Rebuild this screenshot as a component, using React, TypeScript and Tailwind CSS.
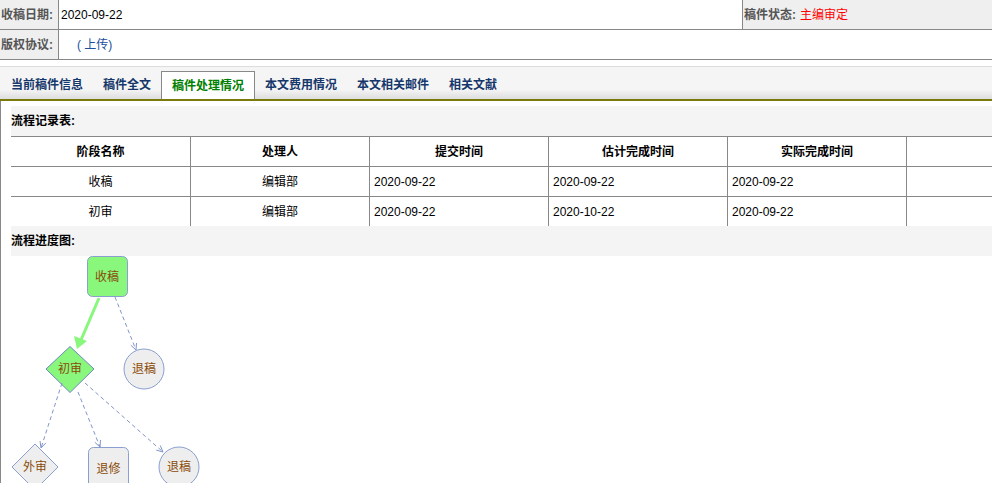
const font = 'font-["Liberation_Sans","Noto_Sans_CJK_SC",sans-serif]';

const tabs = ['当前稿件信息', '稿件全文', '稿件处理情况', '本文费用情况', '本文相关邮件', '相关文献'];

const rows = [
  { stage: '收稿', who: '编辑部', submit: '2020-09-22', plan: '2020-09-22', real: '2020-09-22' },
  { stage: '初审', who: '编辑部', submit: '2020-09-22', plan: '2020-10-22', real: '2020-09-22' },
];

function Arrow({ x1, y1, x2, y2 }: { x1: number; y1: number; x2: number; y2: number }) {
  const a = Math.atan2(y2 - y1, x2 - x1);
  const l = 7;
  const p1 = [x2 - l * Math.cos(a - 0.45), y2 - l * Math.sin(a - 0.45)];
  const p2 = [x2 - l * Math.cos(a + 0.45), y2 - l * Math.sin(a + 0.45)];
  return (
    <g stroke="#7f95c9" fill="none" strokeWidth="1">
      <line x1={x1} y1={y1} x2={x2} y2={y2} strokeDasharray="4 3" />
      <polyline points={`${p1[0]},${p1[1]} ${x2},${y2} ${p2[0]},${p2[1]}`} />
    </g>
  );
}

function Flow() {
  const text = { fill: '#8a4b08', fontSize: 12, textAnchor: 'middle' as const, dominantBaseline: 'central' as const };
  return (
    <svg width="260" height="240" className="block">
      {/* 收稿 */}
      <rect x="76.5" y="0.5" width="40" height="40" rx="5" fill="#88f77c" stroke="#8a9fd0" />
      <text x="96" y="21" {...text}>收稿</text>

      {/* solid arrow to 初审 */}
      <line x1="88" y1="42" x2="70" y2="84" stroke="#88f77c" strokeWidth="3" />
      <polygon points="66,93 63,80 76,85" fill="#88f77c" />

      <Arrow x1={104} y1={41} x2={125} y2={94} />

      {/* 初审 */}
      <polygon points="35,113 59,90.5 83,113 59,136.5" fill="#88f77c" stroke="#6f88c4" />
      <text x="59" y="113" {...text}>初审</text>

      {/* 退稿 */}
      <circle cx="133" cy="113" r="20" fill="#eeeeee" stroke="#8a9fd0" />
      <text x="133" y="113" {...text}>退稿</text>

      <Arrow x1={51} y1={127} x2={30} y2={192} />
      <Arrow x1={67} y1={136} x2={89} y2={191} />
      <Arrow x1={74} y1={127} x2={152} y2={196} />

      {/* 外审 */}
      <polygon points="1,211 24,188 47,211 24,234" fill="#eeeeee" stroke="#8a9fd0" />
      <text x="24" y="211" {...text}>外审</text>

      {/* 退修 */}
      <rect x="77.5" y="191.5" width="40" height="44" rx="5" fill="#eeeeee" stroke="#8a9fd0" />
      <text x="97.5" y="213" {...text}>退修</text>

      {/* 退稿 */}
      <circle cx="168" cy="211" r="20" fill="#eeeeee" stroke="#8a9fd0" />
      <text x="168" y="211" {...text}>退稿</text>
    </svg>
  );
}

export default function App() {
  return (
    <div className={`${font} text-[12px] text-black bg-white w-[992px] h-[483px] overflow-hidden`}>
      {/* 稿件基本信息 */}
      <div className="flex h-[30px] border-b border-[#888]">
        <div className="w-[59px] bg-[#efefef] border-r border-[#888] flex items-center pl-[1px] font-bold text-[#555]">收稿日期:</div>
        <div className="w-[683px] flex items-center pl-[2px]">2020-09-22</div>
        <div className="flex-1 bg-[#efefef] border-l border-[#888] flex items-center pl-[1px]">
          <span className="font-bold text-[#555]">稿件状态:</span>
          <span className="text-[#ff0000] ml-[4px]">主编审定</span>
        </div>
      </div>
      <div className="flex h-[30px] border-b border-[#888]">
        <div className="w-[59px] bg-[#efefef] border-r border-[#888] flex items-center pl-[1px] font-bold text-[#555]">版权协议:</div>
        <div className="flex-1 flex items-center pl-[18px] text-[#1c4e9c]">( 上传)</div>
      </div>

      {/* 选项卡 */}
      <div className="mt-[6px] border-t border-[#dddddd] h-[35px] bg-gradient-to-b from-[#f5f5f5] from-70% to-[#dedede] border-b-2 border-b-[#7a7a0a] flex items-end pl-[1px]">
        {tabs.map((t) =>
          t === '稿件处理情况' ? (
            <div key={t} className="h-[28px] px-[10px] bg-white border border-b-0 border-[#888] flex items-center font-bold text-[#008000]">
              {t}
            </div>
          ) : (
            <div key={t} className="h-[28px] px-[10px] flex items-center font-bold text-[#15376b]">
              {t}
            </div>
          )
        )}
      </div>

      {/* 内容 */}
      <div className="border-l border-[#888] pl-[10px] pt-[5px]">
        <div className="h-[30px] bg-[#f4f4f4] flex items-center font-bold">流程记录表:</div>
        <div className="w-[1074px]">
          <div className="flex h-[30px] border-t border-[#888] font-bold">
            {['阶段名称', '处理人', '提交时间', '估计完成时间', '实际完成时间', ''].map((h, i) => (
              <div key={i} className={`w-[179px] flex items-center justify-center ${i > 0 ? 'border-l border-[#888]' : ''}`}>
                {h}
              </div>
            ))}
          </div>
          {rows.map((r) => (
            <div key={r.stage} className="flex h-[30px] border-t border-[#888]">
              <div className="w-[179px] flex items-center justify-center">{r.stage}</div>
              <div className="w-[179px] flex items-center justify-center border-l border-[#888]">{r.who}</div>
              <div className="w-[179px] flex items-center pl-[4px] border-l border-[#888]">{r.submit}</div>
              <div className="w-[179px] flex items-center pl-[4px] border-l border-[#888]">{r.plan}</div>
              <div className="w-[179px] flex items-center pl-[4px] border-l border-[#888]">{r.real}</div>
              <div className="w-[179px] border-l border-[#888]" />
            </div>
          ))}
        </div>
        <div className="h-[30px] bg-[#f4f4f4] flex items-center font-bold">流程进度图:</div>
        <Flow />
      </div>
    </div>
  );
}
